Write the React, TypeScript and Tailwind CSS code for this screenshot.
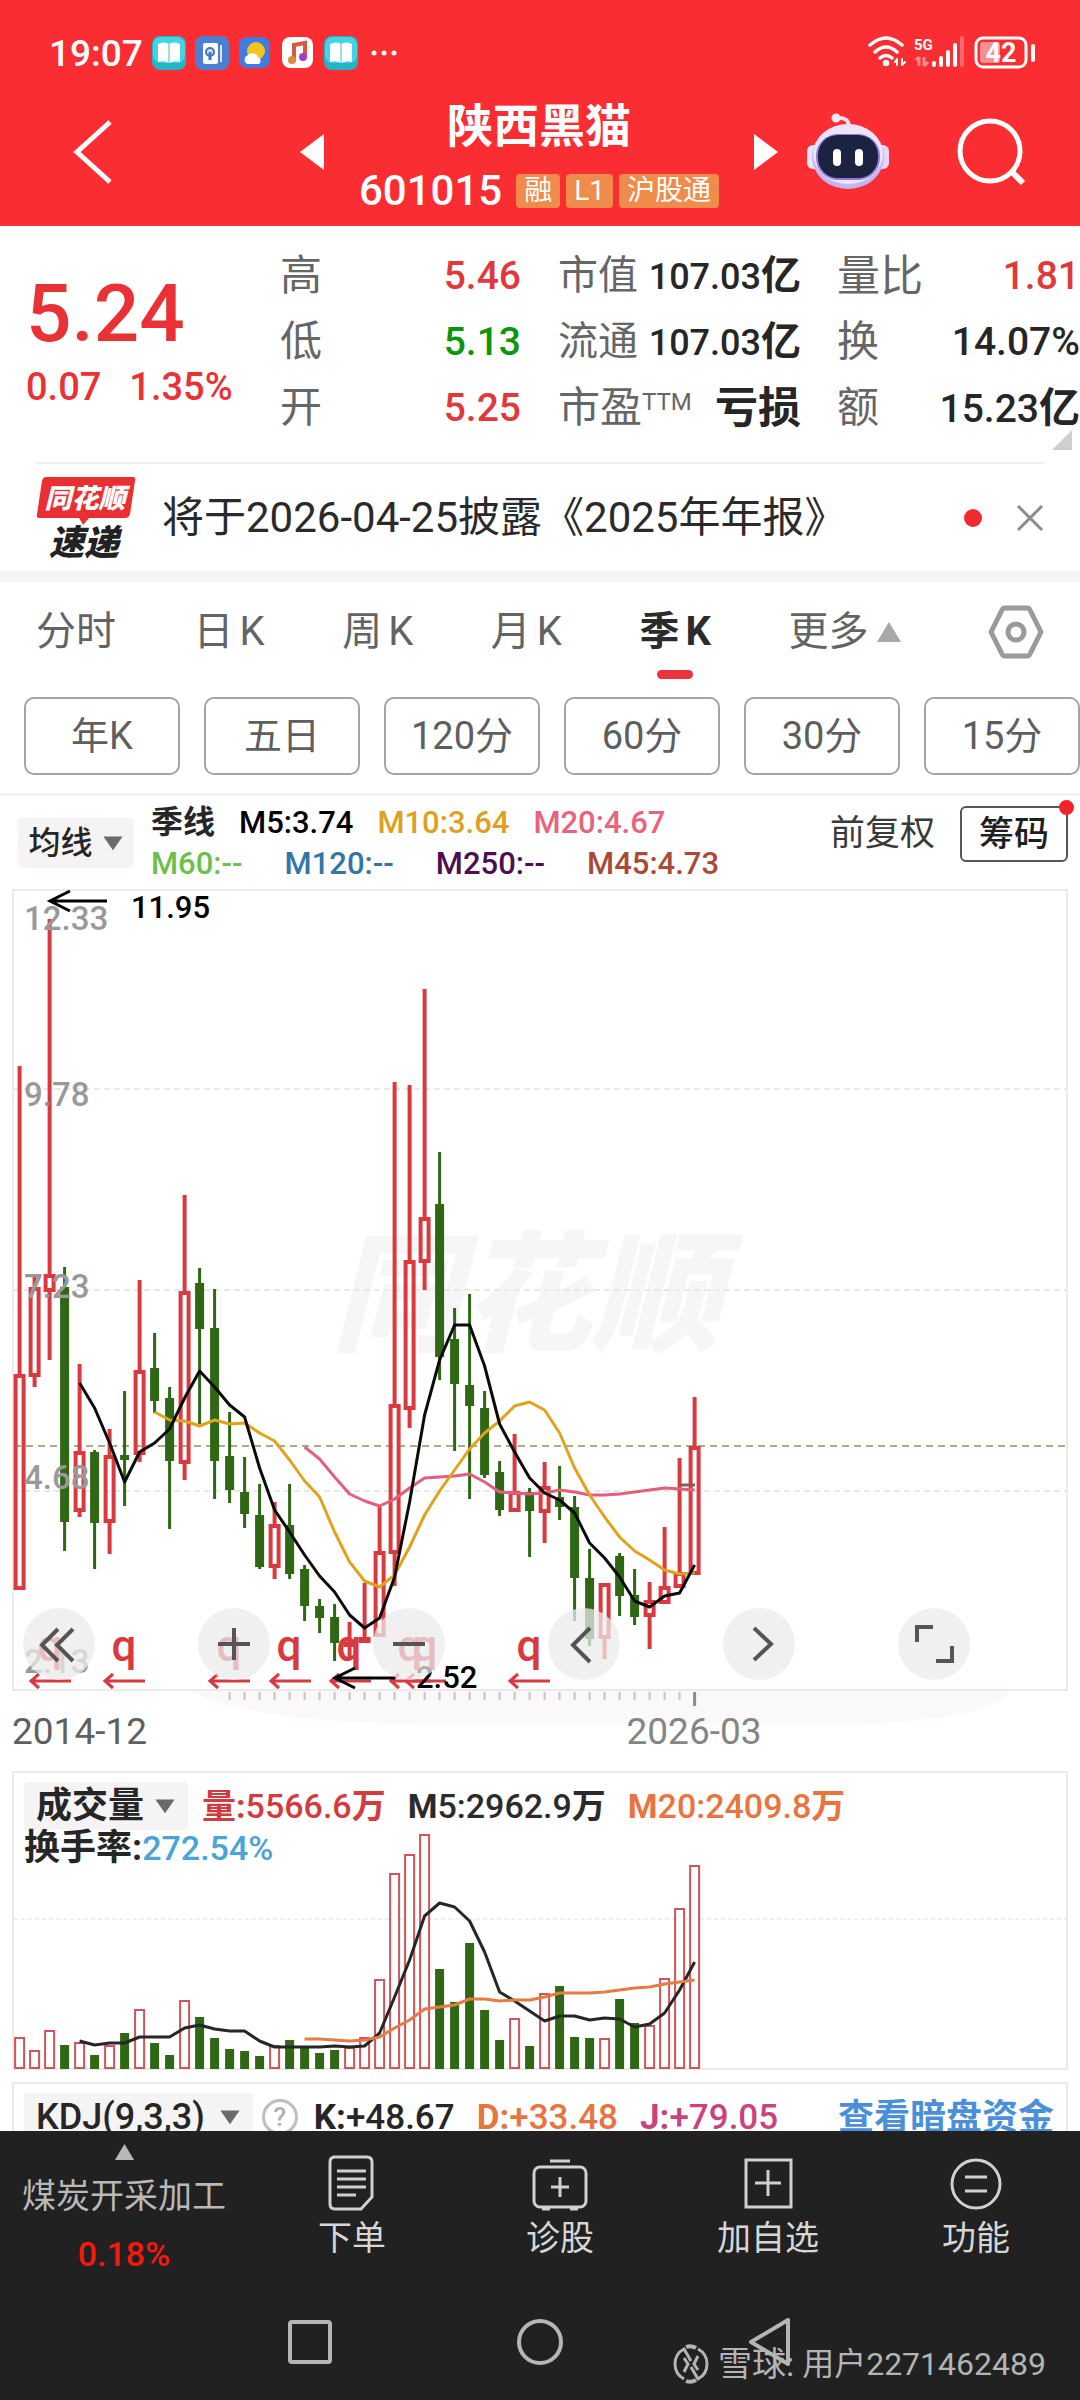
import type { ReactNode } from 'react';

type Candle = {
  up: boolean;
  high: number;
  top: number;
  bottom: number;
  low: number;
  vol: number;
};

const r = (high: number, top: number, bottom: number, low: number, vol: number): Candle => ({ up: true, high, top, bottom, low, vol });
const g = (high: number, top: number, bottom: number, low: number, vol: number): Candle => ({ up: false, high, top, bottom, low, vol });

// high / body top / body bottom / low / volume top, in chart units
const candles: Candle[] = [
  r(1066, 1374, 1590, 1590, 2038),
  r(1275, 1287, 1377, 1387, 2051),
  r(919, 1274, 1292, 1360, 2031),
  g(1267, 1287, 1522, 1551, 2045),
  r(1364, 1451, 1512, 1517, 2043),
  g(1450, 1452, 1523, 1569, 2055),
  r(1429, 1455, 1523, 1554, 2046),
  g(1391, 1455, 1460, 1506, 2033),
  r(1280, 1370, 1455, 1462, 2010),
  g(1333, 1368, 1401, 1413, 2043),
  g(1387, 1398, 1461, 1529, 2055),
  r(1195, 1291, 1464, 1480, 2001),
  g(1268, 1283, 1329, 1424, 2017),
  g(1289, 1328, 1461, 1499, 2038),
  g(1412, 1456, 1490, 1503, 2049),
  g(1457, 1492, 1514, 1528, 2051),
  g(1484, 1515, 1567, 1569, 2056),
  r(1502, 1524, 1568, 1579, 2046),
  g(1484, 1525, 1574, 1579, 2040),
  g(1565, 1569, 1606, 1621, 2047),
  g(1599, 1606, 1618, 1633, 2053),
  g(1604, 1617, 1643, 1661, 2050),
  r(1622, 1642, 1646, 1658, 2048),
  r(1583, 1637, 1643, 1643, 2038),
  r(1505, 1551, 1637, 1637, 1980),
  r(1082, 1404, 1554, 1586, 1874),
  r(1085, 1260, 1410, 1428, 1855),
  r(989, 1217, 1263, 1290, 1835),
  g(1152, 1204, 1357, 1380, 1969),
  g(1308, 1339, 1384, 1451, 2002),
  g(1294, 1385, 1406, 1499, 1943),
  g(1391, 1408, 1475, 1478, 2010),
  g(1461, 1472, 1510, 1516, 2040),
  r(1434, 1491, 1512, 1512, 2019),
  g(1488, 1492, 1511, 1557, 2046),
  r(1462, 1486, 1513, 1543, 1994),
  g(1466, 1497, 1507, 1520, 1986),
  g(1496, 1507, 1578, 1621, 2037),
  g(1549, 1578, 1639, 1646, 2038),
  r(1583, 1583, 1639, 1659, 2039),
  g(1553, 1556, 1596, 1616, 1999),
  g(1569, 1595, 1617, 1625, 2023),
  r(1582, 1600, 1617, 1649, 2026),
  r(1527, 1586, 1604, 1604, 1979),
  r(1458, 1572, 1588, 1588, 1909),
  r(1397, 1446, 1575, 1575, 1866),
];

const ma5 = [1383, 1408, 1443, 1482, 1452, 1443, 1429, 1398, 1371, 1387, 1405, 1417, 1468, 1510, 1532, 1555, 1576, 1592, 1615, 1628, 1618, 1577, 1502, 1415, 1360, 1325, 1325, 1366, 1424, 1452, 1478, 1493, 1500, 1513, 1543, 1558, 1577, 1601, 1607, 1596, 1593, 1565];
const ma10 = [1412, 1420, 1421, 1426, 1420, 1424, 1423, 1433, 1441, 1460, 1481, 1497, 1532, 1562, 1581, 1587, 1575, 1547, 1515, 1491, 1470, 1449, 1433, 1421, 1406, 1402, 1410, 1433, 1468, 1495, 1517, 1537, 1551, 1560, 1570, 1574, 1573];
const ma20 = [1447, 1459, 1477, 1494, 1501, 1506, 1499, 1488, 1478, 1477, 1476, 1474, 1482, 1492, 1493, 1494, 1493, 1490, 1492, 1495, 1495, 1494, 1492, 1490, 1488, 1489, 1490];
const volMa5 = [2041, 2045, 2043, 2043, 2037, 2037, 2037, 2028, 2025, 2029, 2031, 2031, 2041, 2047, 2047, 2047, 2047, 2046, 2047, 2046, 2033, 1997, 1960, 1916, 1903, 1907, 1921, 1952, 1992, 2001, 2011, 2021, 2016, 2016, 2020, 2018, 2019, 2027, 2024, 2013, 1990, 1962];
const volMa20 = [2039, 2039, 2040, 2041, 2040, 2037, 2028, 2020, 2009, 2007, 2005, 1999, 1999, 2001, 2000, 2000, 1997, 1993, 1993, 1993, 1992, 1990, 1988, 1987, 1984, 1982, 1980];

const RED = '#d93a3f';
const GREEN = '#2f6714';

const xAt = (i: number) => 19.6 + 15 * i;
const linePoints = (values: number[], start: number) =>
  values.map((y, i) => `${xAt(i + start)},${y}`).join(' ');

const priceLabels = [
  { text: '12.33', y: 930 },
  { text: '9.78', y: 1106 },
  { text: '7.23', y: 1298 },
  { text: '4.68', y: 1489 },
  { text: '2.13', y: 1673 },
];

// ex-rights markers
const rights = [
  { q: 50, arrow: 30 },
  { q: 124, arrow: 104 },
  { q: 229, arrow: 209 },
  { q: 289, arrow: 270 },
  { q: 349, arrow: 330 },
  { q: 410, arrow: 390 },
  { q: 425, arrow: 405 },
  { q: 529, arrow: 509 },
];

function PriceChart() {
  return (
    <svg viewBox="12 889 1056 882" className="block h-auto w-full" role="img" aria-label="季K线图">
      <path d="M190 1691H1012Q985 1720 860 1724H420Q250 1722 190 1691Z" fill="#faf8f8" />
      <rect x="13" y="890" width="1054" height="800" fill="none" stroke="#ebebeb" strokeWidth="2" />
      <text x="526" y="1341" textAnchor="middle" fontSize="130" fontStyle="italic" fontWeight="900" fill="#f6f6f6">同花顺</text>
      {[1089, 1290, 1491].map((y) => (
        <line key={y} x1="14" x2="1066" y1={y} y2={y} stroke="#e8e8e8" strokeWidth="2" strokeDasharray="6 4" />
      ))}
      <line x1="14" x2="1066" y1="1446" y2="1446" stroke="#a9ae84" strokeWidth="2" strokeDasharray="7 5" />

      {candles.map((c, i) => {
        const x = xAt(i);
        return c.up ? (
          <g key={i} stroke={RED} fill="none">
            <path d={`M${x} ${c.high}V${c.top}M${x} ${c.bottom}V${c.low}`} strokeWidth="4" />
            <rect x={x - 4} y={c.top + 2} width="8" height={Math.max(c.bottom - c.top - 4, 1)} strokeWidth="4" />
          </g>
        ) : (
          <g key={i} fill={GREEN}>
            <rect x={x - 1.5} y={c.high} width="3" height={c.low - c.high} />
            <rect x={x - 4.5} y={c.top} width="9" height={c.bottom - c.top} />
          </g>
        );
      })}

      <g fill="none" strokeWidth="3" strokeLinejoin="round">
        <polyline points={linePoints(ma20, 19)} stroke="#e25f7d" />
        <polyline points={linePoints(ma10, 9)} stroke="#e0a31b" />
        <polyline points={linePoints(ma5, 4)} stroke="#0b0b0b" />
        <path d="M680 1485h15" stroke="#8f5a4c" />
      </g>

      <g fontSize="33" fontWeight="500" fill="#999">
        {priceLabels.map((l) => (
          <text key={l.text} x="24" y={l.y}>{l.text}</text>
        ))}
      </g>

      {rights.map((m) => (
        <g key={m.q}>
          <text x={m.q} y="1661" textAnchor="middle" fontSize="44" fontWeight="500" fill={RED}>q</text>
          <path d={`M${m.arrow + 41} 1681H${m.arrow + 1}m8 -7l-8 7l8 7`} fill="none" stroke={RED} strokeWidth="3" />
        </g>
      ))}

      <g fill="none" stroke="#000" strokeWidth="3">
        <path d="M107 901H50M70 891L50 901L70 911" />
        <path d="M395 1678H335M355 1668L335 1678L355 1688" />
      </g>
      <text x="131" y="918" fontSize="31" fontWeight="500">11.95</text>
      <text x="416" y="1688" fontSize="31" fontWeight="500">2.52</text>

      {candles.slice(14, 45).map((_, i) => (
        <line key={i} x1={xAt(i + 14)} x2={xAt(i + 14)} y1="1692" y2="1700" stroke="#c4c4c4" strokeWidth="2" />
      ))}
      <line x1={xAt(45)} x2={xAt(45)} y1="1692" y2="1706" stroke="#8a8a8a" strokeWidth="3" />
      <text x="12" y="1744" fontSize="37" fill="#5f5f5f">2014-12</text>
      <text x="694" y="1744" fontSize="37" fill="#858585" textAnchor="middle">2026-03</text>
    </svg>
  );
}

function VolumeChart() {
  return (
    <svg viewBox="12 1771 1056 300" className="block h-auto w-full" role="img" aria-label="成交量图">
      <rect x="13" y="1772" width="1054" height="297" fill="none" stroke="#ebebeb" strokeWidth="2" />
      <line x1="14" x2="1066" y1="1919" y2="1919" stroke="#dedede" strokeDasharray="4 3" />
      {candles.map((c, i) =>
        c.up ? (
          <rect key={i} x={xAt(i) - 4.5} y={c.vol} width="9" height={2068 - c.vol} fill="#fff" stroke="#d0545a" strokeWidth="2" />
        ) : (
          <rect key={i} x={xAt(i) - 4.5} y={c.vol} width="9" height={2069 - c.vol} fill={GREEN} />
        ),
      )}
      <g fill="none" strokeWidth="3" strokeLinejoin="round">
        <polyline points={linePoints(volMa5, 4)} stroke="#262626" />
        <polyline points={linePoints(volMa20, 19)} stroke="#e67b45" />
      </g>
    </svg>
  );
}

function Caret({ up = false, className = '' }: { up?: boolean; className?: string }) {
  return (
    <svg viewBox="0 0 24 20" className={className} fill="currentColor" aria-hidden="true">
      <path d={up ? 'M12 0L24 20H0Z' : 'M0 2H24L12 19Z'} />
    </svg>
  );
}

function BookApp() {
  return (
    <svg viewBox="0 0 34 34" className="size-[34px]">
      <rect width="34" height="34" rx="8" fill="#25b4c6" />
      <rect x="1" y="1" width="32" height="26" rx="8" fill="#45d4e4" />
      <path d="M6 8Q12 5 17 8Q22 5 28 8V26Q22 24 17 27Q12 24 6 26Z" fill="#fff" />
      <path d="M17 8V27" stroke="#9fdfea" strokeWidth="2" />
    </svg>
  );
}

function StatusBar() {
  return (
    <div className="flex h-[34px] items-center justify-between pr-[44px] pl-[49px]">
      <div className="flex items-center gap-[9px]">
        <span className="text-[37px] leading-none font-medium">19:07</span>
        <BookApp />
        <svg viewBox="0 0 34 34" className="size-[34px]">
          <rect width="34" height="34" rx="8" fill="#4a7fd2" />
          <rect x="8" y="7" width="15" height="21" rx="2" fill="#fff" />
          <path d="M26 9V26" stroke="#dbe8fa" strokeWidth="2" />
          <circle cx="15" cy="16" r="4" fill="#cfe0f7" stroke="#3c74c8" strokeWidth="2" />
          <path d="M15 16V24" stroke="#3c74c8" strokeWidth="3" />
        </svg>
        <svg viewBox="0 0 34 34" className="size-[34px]">
          <rect x="1" y="1" width="31" height="31" rx="8" fill="#3f7be0" />
          <circle cx="18" cy="15" r="9" fill="#f7c21e" />
          <path d="M9 28a5 5 0 0 1 1-9a6 6 0 0 1 10 2a4 4 0 0 1 1 7Z" fill="#fff" />
        </svg>
        <svg viewBox="0 0 34 34" className="size-[34px]">
          <rect x="1" y="1" width="31" height="31" rx="8" fill="#fff" />
          <path d="M13 24V9L24 7V20" fill="none" stroke="#d9573f" strokeWidth="4" />
          <circle cx="11" cy="24" r="4" fill="#e08a3c" />
          <circle cx="22" cy="21" r="4" fill="#a33fc4" />
        </svg>
        <BookApp />
        <svg viewBox="0 0 28 6" className="ml-1 h-[6px] w-[28px]" fill="#fff">
          <circle cx="3" cy="3" r="2.500" />
          <circle cx="13" cy="3" r="2.500" />
          <circle cx="23" cy="3" r="2.500" />
        </svg>
      </div>
      <div className="flex items-center gap-2">
        <svg viewBox="0 0 38 34" className="h-[34px] w-[38px]" fill="none" stroke="#fff" strokeWidth="3.500" strokeLinecap="round">
          <path d="M2 9Q18 -5 34 9M7 16Q18 6 29 16M12 22Q18 17 24 22" />
          <circle cx="18" cy="27" r="1.500" fill="#fff" />
          <path d="M29 23V29M27 26L29 23M34 23V29M34 29L37 26" strokeWidth="2" />
        </svg>
        <svg viewBox="0 0 52 34" className="h-[34px] w-[52px]">
          <text x="0" y="14" fontSize="15" fontWeight="700" fill="#fff">5G</text>
          <path d="M5 21V30M2 24L5 21M10 21V30M10 30L14 26" fill="none" stroke="#fc8b8f" strokeWidth="3" />
          <path d="M20 27V29M27 22V29M34 16V29M41 9V29" stroke="#fff" strokeWidth="4" strokeLinecap="round" />
          <path d="M48 2V29" stroke="#fc6a6f" strokeWidth="4" strokeLinecap="round" />
        </svg>
        <svg viewBox="0 0 62 34" className="h-[34px] w-[62px]">
          <rect x="2" y="2" width="50" height="29" rx="7" fill="none" stroke="#fff" strokeWidth="3" />
          <rect x="6" y="6" width="20" height="21" rx="3" fill="#fc8e91" />
          <text x="27" y="26" fontSize="27" fontWeight="700" fill="#fff" textAnchor="middle">42</text>
          <path d="M59 10V24" stroke="#fff" strokeWidth="4" strokeLinecap="round" />
        </svg>
      </div>
    </div>
  );
}

function Robot() {
  return (
    <svg viewBox="0 0 82 78" className="h-[78px] w-[82px]">
      <path d="M30 5Q42 4 42 14" fill="none" stroke="#f8dcf0" strokeWidth="4" />
      <circle cx="29" cy="5" r="4.500" fill="#fbe6f3" />
      <rect x="0" y="32" width="14" height="24" rx="6" fill="#ece6fb" />
      <rect x="68" y="32" width="14" height="24" rx="6" fill="#e3d6fb" />
      <ellipse cx="41" cy="44" rx="36" ry="32" fill="#c3b3f3" />
      <ellipse cx="41" cy="41" rx="35" ry="30" fill="#efe2fb" />
      <rect x="9" y="21" width="64" height="46" rx="22" fill="#8f7ae0" />
      <rect x="11" y="22" width="60" height="43" rx="20" fill="#1b2340" />
      <rect x="26" y="36" width="8" height="17" rx="4" fill="#fff" />
      <rect x="48" y="36" width="8" height="17" rx="4" fill="#fff" />
    </svg>
  );
}

function Header() {
  return (
    <header className="flex h-[226px] flex-col bg-[#fa2d33] pt-[36px] text-white">
      <StatusBar />
      <div className="flex flex-1 items-center pt-[8px] pr-[53px] pl-[72px]">
        <button type="button" aria-label="返回" className="w-[228px]">
          <svg viewBox="0 0 42 64" className="h-[64px] w-[42px]" fill="none" stroke="#fff" strokeWidth="5">
            <path d="M38 2L5 32L38 62" />
          </svg>
        </button>
        <button type="button" aria-label="上一只">
          <svg viewBox="0 0 24 36" className="h-[36px] w-[24px]" fill="#fff"><path d="M24 0V36L0 18Z" /></svg>
        </button>
        <div className="flex flex-1 flex-col items-center gap-[10px] pt-2">
          <h1 className="text-[46px] leading-[60px] font-bold">陕西黑猫</h1>
          <div className="flex items-center gap-[6px]">
            <span className="mr-2 text-[42px] leading-[50px] font-medium">601015</span>
            <span className="rounded-sm bg-[#ef8b4b] px-2 text-[28px] leading-[34px]">融</span>
            <span className="rounded-sm bg-[#ef8b4b] px-2 text-[28px] leading-[34px]">L1</span>
            <span className="rounded-sm bg-[#ef8b4b] px-2 text-[28px] leading-[34px]">沪股通</span>
          </div>
        </div>
        <button type="button" aria-label="下一只">
          <svg viewBox="0 0 24 36" className="h-[36px] w-[24px]" fill="#fff"><path d="M0 0V36L24 18Z" /></svg>
        </button>
        <button type="button" aria-label="智能助手" className="ml-[29px]"><Robot /></button>
        <button type="button" aria-label="搜索" className="ml-[68px]">
          <svg viewBox="0 0 70 70" className="size-[70px]" fill="none" stroke="#fff" strokeWidth="5">
            <circle cx="33" cy="34" r="30" />
            <path d="M54 54L66 66" strokeWidth="6" />
          </svg>
        </button>
      </div>
    </header>
  );
}

function Stat({ label, children, tone = 'text-[#262626]', labelSize = 'text-[42px]' }: { label: ReactNode; children: ReactNode; tone?: string; labelSize?: string }) {
  return (
    <div className="flex h-[66px] items-center justify-between whitespace-nowrap">
      <dt className={`text-[#666] ${labelSize}`}>{label}</dt>
      <dd className={`font-medium ${tone}`}>{children}</dd>
    </div>
  );
}

function Quote() {
  return (
    <section className="relative flex h-[236px] pt-[17px] leading-none">
      <div className="w-[280px] shrink-0 pl-[26px] text-[#e93235]">
        <div className="pt-[31px] text-[80px] font-medium">5.24</div>
        <div className="flex gap-[28px] pt-[14px] text-[38px] font-medium">
          <span>0.07</span>
          <span>1.35%</span>
        </div>
      </div>
      <dl className="w-[241px] shrink-0 text-[39px]">
        <Stat label="高" tone="text-[#e0393c]">5.46</Stat>
        <Stat label="低" tone="text-[#0c960c]">5.13</Stat>
        <Stat label="开" tone="text-[#e0393c]">5.25</Stat>
      </dl>
      <dl className="ml-[37px] w-[243px] shrink-0 text-[36px]">
        <Stat label="市值" labelSize="text-[40px]">107.03<b className="text-[40px]">亿</b></Stat>
        <Stat label="流通" labelSize="text-[40px]">107.03<b className="text-[40px]">亿</b></Stat>
        <Stat label={<>市盈<sup className="text-[24px]">TTM</sup></>} labelSize="text-[42px]"><b className="text-[43px]">亏损</b></Stat>
      </dl>
      <dl className="ml-[36px] flex-1 text-[39px]">
        <Stat label="量比" tone="text-[#e0393c]" labelSize="text-[43px]">1.81</Stat>
        <Stat label="换">14.07%</Stat>
        <Stat label="额">15.23<b className="text-[41px]">亿</b></Stat>
      </dl>
      <svg viewBox="0 0 20 20" className="absolute right-2 bottom-[12px] size-[20px]" fill="#cfcfcf"><path d="M20 0V20H0Z" /></svg>
    </section>
  );
}

function News() {
  return (
    <section className="mx-[36px] flex h-[109px] items-center border-t-2 border-[#f0f0f0]">
      <svg viewBox="0 0 100 84" className="h-[84px] w-[100px]" role="img" aria-label="同花顺速递">
        <path d="M10 1H97Q100 1 99 5L94 38Q93 42 89 42H53L47 49L43 42H4Q0 42 1 38L6 5Q7 1 10 1Z" fill="#ea2f33" />
        <text x="49" y="32" fontSize="27" fontWeight="900" fontStyle="italic" fill="#fff" textAnchor="middle">同花顺</text>
        <text x="48" y="79" fontSize="35" fontWeight="900" fontStyle="italic" fill="#222" textAnchor="middle">速递</text>
      </svg>
      <a href="#report" className="ml-[26px] flex-1 text-[42px] whitespace-nowrap text-[#2a2a2a]">将于2026-04-25披露《2025年年报》</a>
      <span className="size-[18px] rounded-full bg-[#f02b30]" />
      <button type="button" aria-label="关闭" className="ml-[34px]">
        <svg viewBox="0 0 28 28" className="size-[28px]" stroke="#8c8c8c" strokeWidth="3"><path d="M2 2L26 26M26 2L2 26" /></svg>
      </button>
    </section>
  );
}

function Tabs() {
  const tabs = ['日', '周', '月', '季'];
  return (
    <nav className="flex h-[115px] items-start justify-between pt-[18px] pr-[36px] pl-[36px] text-[40px] leading-[64px] text-[#636363]">
      <button type="button">分时</button>
      {tabs.map((t) => (
        <button key={t} type="button" className={t === '季' ? 'flex flex-col items-center font-bold text-[#2b2b2b]' : ''}>
          <span>{t}<span className="ml-[6px]">K</span></span>
          {t === '季' && <span className="mt-[6px] h-[9px] w-[36px] rounded-full bg-[#e8343a]" />}
        </button>
      ))}
      <button type="button" className="flex items-center gap-[8px]">
        更多
        <Caret up className="h-[20px] w-[26px] text-[#a8a8a8]" />
      </button>
      <button type="button" aria-label="设置" className="ml-[8px] flex h-[64px] items-center">
        <svg viewBox="0 0 56 54" className="h-[54px] w-[56px]" fill="none" stroke="#9a9a9a" strokeWidth="5" strokeLinejoin="round">
          <path d="M17 3H39Q41 3 42 5L53 27L42 49Q41 51 39 51H17Q15 51 14 49L3 27L14 5Q15 3 17 3Z" />
          <circle cx="28" cy="27" r="8" />
        </svg>
      </button>
    </nav>
  );
}

function Periods() {
  return (
    <div className="grid grid-cols-6 gap-[24px] pb-[18px] pl-[24px] text-[38px] leading-none text-[#5e5e5e]">
      {['年K', '五日', '120分', '60分', '30分', '15分'].map((p) => (
        <button key={p} type="button" className="h-[78px] rounded-[10px] border-2 border-[#a3a3a3]">{p}</button>
      ))}
    </div>
  );
}

function Legend() {
  return (
    <section className="flex h-[96px] items-center border-t-3 border-[#f3f3f3] pr-[12px] pl-[18px] font-medium whitespace-nowrap">
      <button type="button" className="flex h-[50px] w-[116px] items-center justify-center gap-[9px] rounded bg-[#f6f3f4] text-[32px] leading-none text-[#262626]">
        均线
        <Caret className="h-[16px] w-[22px] text-[#6a6a6a]" />
      </button>
      <div className="ml-[17px] flex-1 text-[31px] leading-[41px]">
        <div className="flex gap-[24px]">
          <span className="text-[32px] font-bold text-[#262626]">季线</span>
          <span className="text-black">M5:3.74</span>
          <span className="text-[#dda01f]">M10:3.64</span>
          <span className="text-[#e8637c]">M20:4.67</span>
        </div>
        <div className="flex gap-[42px]">
          <span className="text-[#6cc04a]">M60:--</span>
          <span className="text-[#3375a8]">M120:--</span>
          <span className="text-[#4a1050]">M250:--</span>
          <span className="text-[#a94a37]">M45:4.73</span>
        </div>
      </div>
      <div className="flex items-center self-start pt-[10px]">
        <button type="button" className="text-[35px] font-normal text-[#3a3a3a]">前复权</button>
        <button type="button" className="relative ml-[25px] h-[56px] w-[108px] rounded-md border-2 border-[#555] text-[35px] leading-none text-[#1f1f1f]">
          筹码
          <span className="absolute -top-2 -right-2 size-[15px] rounded-full bg-[#f5222d]" />
        </button>
      </div>
    </section>
  );
}

const controls = [
  { label: '最左', path: 'M35 21L19 37L35 53M50 21L34 37L50 53' },
  { label: '放大', path: 'M36 20V52M20 36H52' },
  { label: '缩小', path: 'M20 36H52' },
  { label: '左移', path: 'M42 20L25 37L42 54' },
  { label: '右移', path: 'M31 20L48 36L31 52' },
  { label: '全屏', path: 'M19 34V19H35M38 53H54V38' },
];

function BottomItem({ label, children }: { label: string; children: ReactNode }) {
  return (
    <button type="button" className="flex w-[208px] flex-col items-center gap-[7px] pt-[24px] text-[34px] leading-[40px] text-[#d6d6d6]">
      <svg viewBox="0 0 56 56" className="size-[56px]" fill="none" stroke="#d0d0d0" strokeWidth="3">{children}</svg>
      {label}
    </button>
  );
}

export default function App() {
  return (
    <div className="flex h-screen flex-col overflow-hidden bg-white font-['Roboto','Noto_Sans_CJK_SC',sans-serif]">
      <Header />
      <main className="min-h-0 flex-1 overflow-hidden">
        <Quote />
        <News />
        <div className="h-[11px] bg-[#f5f5f5]" />
        <Tabs />
        <Periods />
        <Legend />

        <div className="relative mr-[12px] ml-[12px]">
          <PriceChart />
          <div className="absolute bottom-[91px] left-[11px] flex gap-[103px]">
            {controls.map((c) => (
              <button key={c.label} type="button" aria-label={c.label} className="size-[72px] rounded-full bg-[#ebebeb]/75">
                <svg viewBox="0 0 72 72" fill="none" stroke="#555" strokeWidth="4"><path d={c.path} /></svg>
              </button>
            ))}
          </div>
        </div>

        <section className="relative mr-[12px] ml-[12px] font-medium whitespace-nowrap">
          <VolumeChart />
          <div className="absolute top-[11px] left-[12px] text-[34px] leading-none">
            <div className="flex h-[48px] items-center gap-[22px]">
              <button type="button" className="-mr-2 flex h-[48px] items-center gap-[10px] rounded bg-[#f6f3f4] px-[12px] text-[36px] font-bold text-[#262626]">
                成交量
                <Caret className="h-[16px] w-[22px] text-[#6a6a6a]" />
              </button>
              <span className="text-[#d23b3f]"><b>量:</b>5566.6<b>万</b></span>
              <span className="text-[#2b2b2b]"><b>M</b>5:2962.9<b>万</b></span>
              <span className="text-[#e8743f]"><b>M</b>20:2409.8<b>万</b></span>
            </div>
            <div className="text-[#4ba3d8]"><b className="text-[36px] text-[#262626]">换手率:</b>272.54%</div>
          </div>
        </section>

        <section className="mx-[12px] mt-[11px] flex h-[300px] items-start border-2 border-[#ebebeb] pt-[9px] pr-[12px] pl-[10px] text-[35px] font-medium whitespace-nowrap">
          <button type="button" className="flex h-[48px] items-center gap-[14px] rounded bg-[#f6f3f4] px-[12px] text-[36px] text-[#262626]">
            KDJ(9,3,3)
            <Caret className="h-[16px] w-[22px] text-[#6a6a6a]" />
          </button>
          <span className="mt-[6px] ml-[9px] flex size-[36px] items-center justify-center rounded-full border-3 border-[#bdbdbd] text-[26px] leading-none text-[#b0b0b0]">?</span>
          <div className="ml-[16px] flex flex-1 gap-[22px] leading-[50px]">
            <span className="text-[#262626]"><b>K:</b>+48.67</span>
            <span className="text-[#e8743f]"><b>D:</b>+33.48</span>
            <span className="text-[#c9437f]"><b>J:</b>+79.05</span>
          </div>
          <a href="#funds" className="text-[36px] leading-[50px] font-bold text-[#4c8fd9] underline">查看暗盘资金</a>
        </section>
      </main>

      <footer className="relative flex h-[269px] shrink-0 flex-col justify-between bg-[#212121]">
        <div className="flex justify-between">
          <button type="button" className="flex w-[248px] flex-col items-center pt-[13px] text-[34px] leading-[44px] text-[#b8b8b8]">
            <Caret up className="h-[16px] w-[27px]" />
            <span className="mt-[14px]">煤炭开采加工</span>
            <span className="mt-[14px] font-medium text-[#f5190f]">0.18%</span>
          </button>
          <BottomItem label="下单">
            <path d="M9 2H43Q48 2 48 7V42L37 54H11Q6 54 6 49V7Q6 2 11 2Z" />
            <path d="M13 16H42M13 24H42M13 32H42M13 40H32" />
          </BottomItem>
          <BottomItem label="诊股">
            <rect x="2" y="12" width="52" height="40" rx="6" />
            <path d="M18 6H38M28 22V42M19 32H37M10 54H18M38 54H46" />
          </BottomItem>
          <BottomItem label="加自选">
            <rect x="6" y="5" width="45" height="47" />
            <path d="M28 15V41M15 28H41" />
          </BottomItem>
          <BottomItem label="功能">
            <circle cx="28" cy="29" r="24" />
            <path d="M17 22H39M17 36H39" />
          </BottomItem>
        </div>
        <div className="flex justify-center gap-[182px] pb-[34px]">
          <button type="button" aria-label="最近任务">
            <svg viewBox="0 0 48 48" className="size-[48px]" fill="none" stroke="#b5b5b5" strokeWidth="4"><rect x="4" y="4" width="40" height="40" rx="2" /></svg>
          </button>
          <button type="button" aria-label="主屏幕">
            <svg viewBox="0 0 48 48" className="size-[48px]" fill="none" stroke="#b5b5b5" strokeWidth="4"><circle cx="24" cy="24" r="21" /></svg>
          </button>
          <button type="button" aria-label="返回">
            <svg viewBox="0 0 48 48" className="size-[48px]" fill="none" stroke="#b5b5b5" strokeWidth="4" strokeLinejoin="round"><path d="M42 2V46L5 24Z" /></svg>
          </button>
        </div>
        <div className="absolute right-[34px] bottom-[14px] flex items-center gap-[8px] text-[32px] leading-[44px] text-[#b4b4b4]">
          <svg viewBox="0 0 38 40" className="h-[40px] w-[38px]" fill="none" stroke="#b4b4b4" strokeWidth="3">
            <path d="M12 35A17 17 0 0 1 12 5L19 17M26 5A17 17 0 0 1 26 35L19 23" />
            <path d="M12 14L16 20L12 28M26 12L22 20L26 26" strokeWidth="3" />
            <path d="M14 3Q19 1 24 4M14 37Q19 39 24 36" strokeWidth="4" />
          </svg>
          <span className="text-[34px]">雪球:</span>
          <span>用户2271462489</span>
        </div>
      </footer>
    </div>
  );
}
